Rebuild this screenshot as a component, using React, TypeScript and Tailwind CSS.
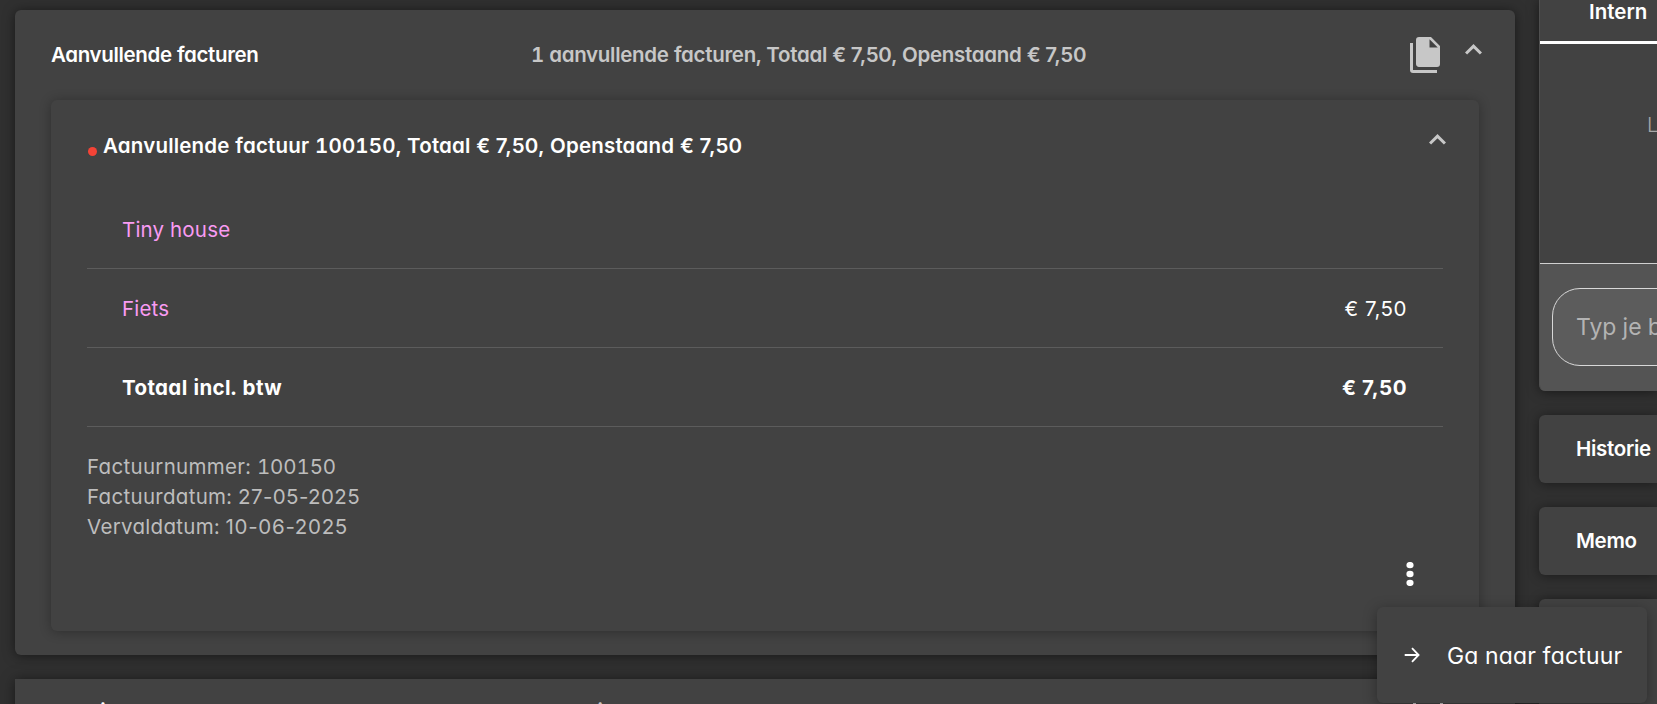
import React from 'react';

interface InvoiceLine {
  label: string;
  amount?: string;
  bold?: boolean;
}

const LINES: InvoiceLine[] = [
  { label: 'Tiny house' },
  { label: 'Fiets', amount: '€ 7,50' },
  { label: 'Totaal incl. btw', amount: '€ 7,50', bold: true },
];

const ChevronUp = () => (
  <svg width="17" height="11" viewBox="0 0 17 11" fill="none" className="shrink-0">
    <path d="M1.06 9.55 8.5 2.12l7.44 7.43" stroke="#c7c7c7" strokeWidth="3" />
  </svg>
);

const FilesIcon = () => (
  <svg width="36" height="36" viewBox="0 0 24 24" fill="#c7c7c7" className="shrink-0">
    <path d="M15,7H20.5L15,1.5V7M8,0H16L22,6V18A2,2 0 0,1 20,20H8C6.89,20 6,19.1 6,18V2A2,2 0 0,1 8,0M4,4V22H20V24H4A2,2 0 0,1 2,22V4H4Z" />
  </svg>
);

const DotsIcon = () => (
  <svg width="8" height="24" viewBox="0 0 8 24" fill="#fff">
    <ellipse cx="4" cy="3.1" rx="3.6" ry="3.2" />
    <ellipse cx="4" cy="12" rx="3.6" ry="3.2" />
    <ellipse cx="4" cy="20.9" rx="3.6" ry="3.2" />
  </svg>
);

// proportional figures keep the comma tight
const Price = () => <span className="[font-feature-settings:'cv11']">€ 7,50</span>;

const SideCard: React.FC<{ title?: string }> = ({ title }) => (
  <div className="h-[68px] shrink-0 rounded-l-md bg-[#424242] pl-[37px] pt-[19px] text-[20.5px] font-semibold leading-[30px] tracking-[-0.3px] shadow-[0_1px_12px_rgba(0,0,0,0.45)]">
    {title}
  </div>
);

const InvoiceCard = () => (
  <div className="mx-9 h-[531px] rounded-md bg-[#424242] px-9 shadow-[0_1px_12px_rgba(0,0,0,0.3)]">
    <div className="flex h-[90px] items-start justify-between">
      <div className="flex pt-[31px]">
        <span className="ml-px mt-[16px] h-[9px] w-[9px] rounded-full bg-[#f44336]" />
        <span className="ml-[6px] text-[20.5px] font-semibold leading-[30px] tracking-[0.19px]">
          Aanvullende factuur 100150, Totaal <Price />, Openstaand <Price />
        </span>
      </div>
      <div className="-mr-[3px] pt-[34px]">
        <ChevronUp />
      </div>
    </div>
    {LINES.map(line => (
      <div
        key={line.label}
        className={`flex h-[79px] items-start justify-between border-b border-[#5c5c5c] pl-[35px] pr-9 pt-[25px] text-[20.5px] leading-[30px] ${line.bold ? 'font-bold tracking-[0.37px]' : 'tracking-[0.2px]'}`}
      >
        <span className={line.bold ? '' : 'text-[#f99bf3]'}>{line.label}</span>
        <span className="tracking-[0.5px] [font-feature-settings:'cv11']">{line.amount}</span>
      </div>
    ))}
    <div className="pt-[25px] text-[20.5px] leading-[30px] tracking-[0.3px] text-[#bdbdbd]">
      <div>Factuurnummer: <span className="tracking-[-0.1px]">100150</span></div>
      <div>Factuurdatum: <span className="tracking-[0.4px] [font-feature-settings:'cv11']">27-05-2025</span></div>
      <div>Vervaldatum: <span className="tracking-[0.7px] [font-feature-settings:'cv11']">10-06-2025</span></div>
    </div>
    <div className="flex justify-end pr-[29px] pt-[20px]">
      <DotsIcon />
    </div>
  </div>
);

const App: React.FC = () => {
  return (
    <div className="relative flex h-[704px] w-[1657px] gap-6 overflow-hidden bg-[#303030] pl-[15px] font-['Inter',sans-serif] text-white [font-feature-settings:'cv11','tnum']">
      <div className="flex w-[1500px] shrink-0 flex-col gap-6 pt-[10px]">
        <div className="h-[645px] shrink-0 rounded-md bg-[#424242] shadow-[0_1px_12px_rgba(0,0,0,0.5)]">
          <div className="flex h-[90px] items-start pl-9 pr-[33px]">
            <div className="w-[480px] pt-[30px] text-[20.5px] font-semibold leading-[30px] tracking-[-0.34px]">Aanvullende facturen</div>
            <div className="flex-1 pt-[30px] text-[20.5px] font-semibold leading-[30px] tracking-[-0.29px] text-[#c7c7c7]">
              1 aanvullende facturen, Totaal <Price />, Openstaand <Price />
            </div>
            <div className="flex items-start gap-[22px]">
              <div className="pt-[27px]"><FilesIcon /></div>
              <div className="pt-[34px]"><ChevronUp /></div>
            </div>
          </div>
          <InvoiceCard />
        </div>

        <div className="flex h-[68px] shrink-0 bg-[#424242] pl-9 pr-[69px] pt-[18px] text-[20.5px] font-semibold leading-[30px] tracking-[-0.34px] shadow-[0_1px_12px_rgba(0,0,0,0.5)]">
          <div className="w-[480px]">Betalingen</div>
          <div className="flex-1 text-[#c7c7c7]">1 betalingen, nog openstaand</div>
          <svg width="36" height="24" viewBox="0 0 36 24" fill="none" stroke="#c7c7c7" strokeWidth="3" className="mt-[6px]">
            <path d="M4.5 0v20h27V0" />
          </svg>
        </div>
      </div>

      <div className="flex w-[118px] shrink-0 flex-col gap-6">
        <div className="h-[391px] shrink-0 overflow-hidden rounded-bl-md border-l border-[#4f4f4f] bg-[#424242] shadow-[0_1px_12px_rgba(0,0,0,0.5)]">
          <div className="h-[44px] border-b-[3px] border-white pl-[49px] text-[20.5px] font-semibold leading-[24px]">Intern</div>
          <div className="h-[219px] pl-[107px] pt-[66px] text-[20.5px] font-light leading-[30px] text-[#a8a8a8]">L</div>
          <div className="h-[128px] border-t border-[#d0d0d0] bg-[#545454] pl-[12px] pt-[24px]">
            <div className="h-[78px] w-[400px] rounded-[28px] border border-[#d8d8d8] bg-[#5c5c5c] pl-[23px] pt-[20px] text-[23px] leading-[36px] text-[#b3b3b3]">Typ je b</div>
          </div>
        </div>
        <SideCard title="Historie" />
        <SideCard title="Memo" />
        <div className="h-[105px] shrink-0 rounded-tl-md bg-[#424242] shadow-[0_1px_12px_rgba(0,0,0,0.45)]" />
      </div>

      {/* context menu */}
      <div className="absolute left-[1377px] top-[607px] flex h-[96px] w-[270px] items-center rounded-md bg-[#424242] pl-[27px] shadow-[0_3px_14px_rgba(0,0,0,0.35)]">
        <svg width="16" height="16" viewBox="0 0 16 16" fill="none" stroke="#fff" strokeWidth="1.8">
          <path d="M.7 8h13.6M8 1.2 14.6 8 8 14.8" />
        </svg>
        <span className="ml-[27px] pt-[2px] text-[23px] leading-[36px] tracking-[0.2px]">Ga naar factuur</span>
      </div>
    </div>
  );
};

export default App;
